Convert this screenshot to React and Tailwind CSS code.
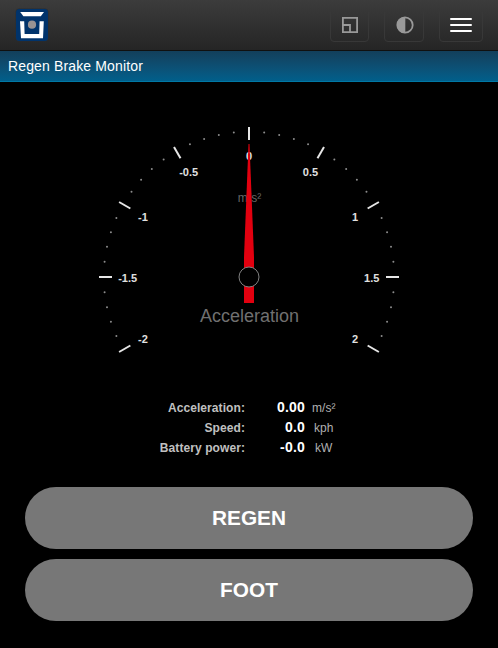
const CX = 249;
const CY = 277;

const point = (deg, r) => {
  const a = (deg * Math.PI) / 180;
  return [CX + r * Math.sin(a), CY - r * Math.cos(a)];
};

const majors = [-120, -90, -60, -30, 0, 30, 60, 90, 120];
const minors = Array.from({ length: 41 }, (_, i) => -120 + i * 6).filter((d) => d % 30 !== 0);

const labels = [
  ['-2', 143, 343],
  ['-1.5', 127.7, 282],
  ['-1', 143, 221],
  ['-0.5', 188.7, 176],
  ['0', 249, 160],
  ['0.5', 310.5, 176],
  ['1', 355, 221],
  ['1.5', 371.7, 282],
  ['2', 355, 343],
];

const metrics = [
  ['Acceleration:', '0.00', 'm/s²'],
  ['Speed:', '0.0', 'kph'],
  ['Battery power:', '-0.0', 'kW'],
];

function Logo() {
  return (
    <svg width="34" height="34" viewBox="0 0 34 34" className="block">
      <rect x="0.5" y="0.5" width="33" height="33" rx="4" fill="#2a2d31" />
      <rect x="1" y="1" width="32" height="32" rx="3.5" fill="#00336b" />
      <path d="M5.2 4h23.8l-3.2 4.3H8.4z" fill="#fff" />
      <path d="M5 13.3h4.2l.4 12.7h14.6l.4-12.7h4.2L28 30.2H6z" fill="#fff" />
      <circle cx="17" cy="16.7" r="4.1" fill="#999393" />
    </svg>
  );
}

function Gauge() {
  return (
    <svg width="498" height="316" viewBox="0 82 498 316" className="block">
      {minors.map((d) => {
        const [x, y] = point(d, 145.2);
        return <circle key={d} cx={x} cy={y} r="1" fill="#8c8c8c" />;
      })}
      {majors.map((d) => {
        const [x1, y1] = point(d, 137);
        const [x2, y2] = point(d, 150);
        return <line key={d} x1={x1} y1={y1} x2={x2} y2={y2} stroke="#e6e6e6" strokeWidth="2" />;
      })}
      <g fill="#e0e0e0" fontSize="11" fontWeight="700" textAnchor="middle">
        {labels.map(([t, x, y]) => (
          <text key={t} x={x} y={y}>{t}</text>
        ))}
      </g>
      <text x="249.5" y="202" fill="#666" fontSize="12" textAnchor="middle">m/s²</text>
      <text x="249.5" y="322" fill="#707070" fontSize="18" textAnchor="middle">Acceleration</text>
      <path d="M248.5 144h1L254 257V303H244V257z" fill="#e2000f" />
      <circle cx="249" cy="277" r="10" fill="#000" stroke="#808080" />
    </svg>
  );
}

export default function App() {
  return (
    <div className="flex h-[648px] w-[498px] flex-col overflow-hidden bg-black font-['Liberation_Sans',Arial,sans-serif]">
      <header className="flex h-[51px] shrink-0 items-start justify-between border-b border-[#101010] bg-linear-to-b from-[#3c3c3c] to-[#252525] px-[15px] pt-2">
        <Logo />
        <div className="flex gap-[15px]">
          <button className="flex h-[34px] w-[39px] items-center justify-center rounded border border-[#383838]">
            <svg width="18" height="18" viewBox="0 0 18 18" fill="none" stroke="#999" strokeWidth="1.8">
              <path d="M1.9 1.9h14.2v14.2H1.9zM2 9h7v7" />
            </svg>
          </button>
          <button className="flex h-[34px] w-10 items-center justify-center rounded border border-[#383838] pl-px">
            <svg width="18" height="18" viewBox="0 0 18 18">
              <circle cx="9" cy="9" r="7.7" fill="none" stroke="#999" strokeWidth="1.8" />
              <path d="M9.3 1v16H9A8 8 0 0 1 9 1z" fill="#999" />
            </svg>
          </button>
          <button className="flex h-[34px] w-11 flex-col items-center justify-center gap-1 rounded border border-[#383838]">
            <span className="h-0.5 w-[22px] rounded-[1px] bg-white" />
            <span className="h-0.5 w-[22px] rounded-[1px] bg-white" />
            <span className="h-0.5 w-[22px] rounded-[1px] bg-white" />
          </button>
        </div>
      </header>
      <h1 className="h-[31px] shrink-0 border-b border-[#0078a5] bg-linear-to-b from-[#123f5b] to-[#005f8b] px-2 text-[14px] leading-[30px] tracking-[0.14px] text-white">
        Regen Brake Monitor
      </h1>
      <main>
        <Gauge />
        <div className="-mt-px pl-[145px]">
          {metrics.map(([label, value, unit]) => (
            <div key={label} className="flex h-5 items-baseline leading-5">
              <span className="w-[100px] text-right text-[12px] font-bold tracking-[0.08px] text-[#c0c0c0]">{label}</span>
              <span className="w-[60px] text-right text-[14px] font-bold tracking-[0.2px] text-white">{value}</span>
              <span className="w-[37.5px] text-center text-[12px] text-[#b0b0b0]">{unit}</span>
            </div>
          ))}
        </div>
        <div className="flex flex-col gap-2.5 px-[25px] pt-[30px]">
          <button className="h-[62px] rounded-[31px] bg-[#777] text-[20.8px] font-bold text-white">REGEN</button>
          <button className="h-[62px] rounded-[31px] bg-[#777] text-[20.8px] font-bold text-white">FOOT</button>
        </div>
      </main>
    </div>
  );
}
